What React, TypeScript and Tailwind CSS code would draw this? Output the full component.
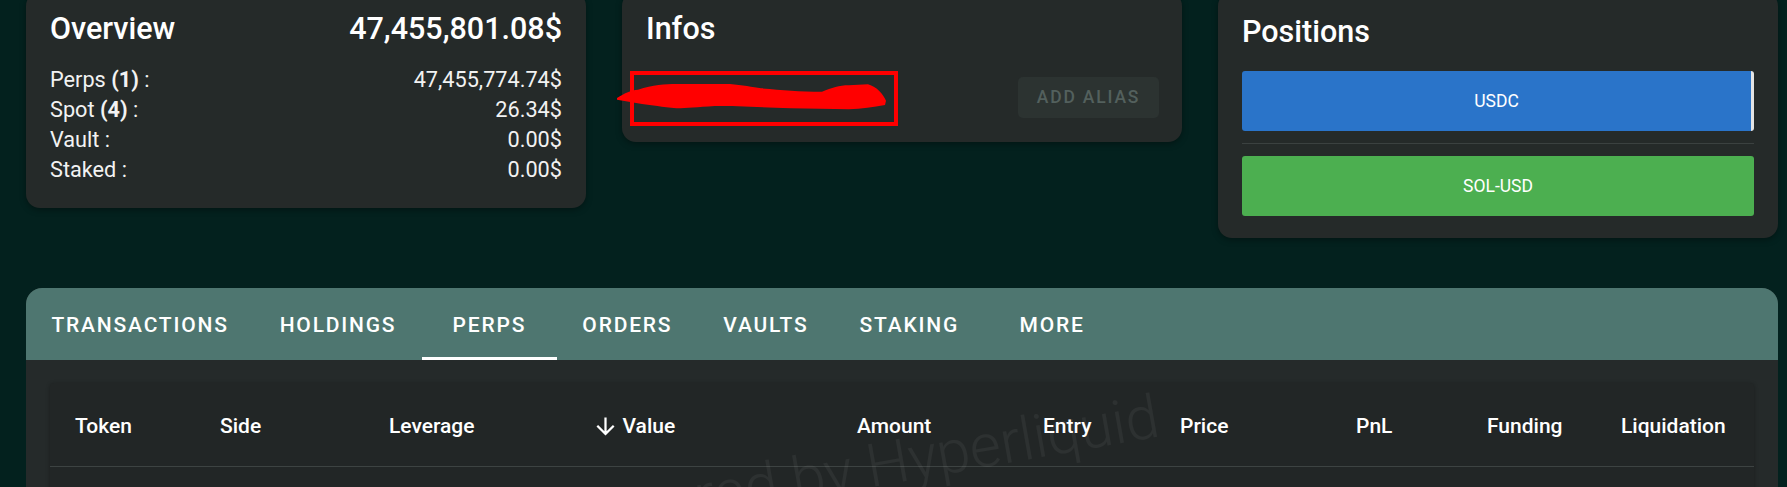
import React from 'react';

const overviewRows = [
  { label: 'Perps', count: 1, value: '47,455,774.74$' },
  { label: 'Spot', count: 4, value: '26.34$' },
  { label: 'Vault', value: '0.00$' },
  { label: 'Staked', value: '0.00$' },
];

const tabs = ['TRANSACTIONS', 'HOLDINGS', 'PERPS', 'ORDERS', 'VAULTS', 'STAKING', 'MORE'];

const columns = ['Token', 'Side', 'Leverage', 'Value', 'Amount', 'Entry', 'Price', 'PnL', 'Funding', 'Liquidation'];

function ArrowDown() {
  return (
    <svg viewBox="0 0 24 24" className="h-[27px] w-[27px] -ml-[4.5px] mr-[4px]" fill="currentColor">
      <path d="M20 12l-1.41-1.41L13 16.17V4h-2v12.17l-5.58-5.59L4 12l8 8 8-8z" />
    </svg>
  );
}

function Card({ children, className = '' }: { children: React.ReactNode; className?: string }) {
  return (
    <div className={`relative rounded-[14px] bg-[#252a29] shadow-[0_2px_6px_rgba(0,0,0,0.35)] px-6 ${className}`}>
      {children}
    </div>
  );
}

export default function App() {
  return (
    <div
      className="relative h-[487px] w-[1787px] overflow-hidden bg-[#03211e] text-white"
      style={{ fontFamily: 'Roboto, "Noto Sans", sans-serif' }}
    >
      <div className="pl-[26px] pr-[9px]">
        {/* Top cards */}
        <div className="-mt-[8px] grid grid-cols-3 items-start gap-[36px]">
          {/* Overview */}
          <Card className="pt-[19px] pb-[23px]">
            <div className="flex items-baseline justify-between">
              <h2 className="text-[30.5px] leading-[36px] font-medium">Overview</h2>
              <span className="text-[30.5px] leading-[36px] font-medium">47,455,801.08$</span>
            </div>
            <div className="mt-[18px]">
              {overviewRows.map((row) => (
                <div key={row.label} className="flex justify-between text-[21.7px] leading-[30px] text-[#f2f2f2]">
                  <span>
                    {row.label}
                    {row.count !== undefined && <b className="font-bold"> ({row.count})</b>} :
                  </span>
                  <span>{row.value}</span>
                </div>
              ))}
            </div>
          </Card>

          {/* Infos */}
          <Card className="pt-[19px] pb-[24px]">
            <h2 className="text-[30.5px] leading-[36px] font-medium">Infos</h2>
            <div className="mt-[30px] flex items-center justify-between">
              <span className="text-[21px] text-[#f2f2f2]">&nbsp;</span>
              <button className="h-[41px] w-[141px] -mr-[1px] rounded-[5px] bg-[#2c3331] text-[17.5px] font-medium tracking-[1.8px] text-[#53605d]">
                ADD ALIAS
              </button>
            </div>
            {/* redaction */}
            <div className="absolute left-[8px] top-[79px] h-[55px] w-[268px] border-[4px] border-[#ff0000]" />
            <svg className="absolute -left-[5px] top-[86px]" width="272" height="36" viewBox="0 0 272 36">
              <path
                d="M0 20 C8 15 14 12 21 11.7 C36 7 48 6 59.5 6 L113 6 C125 7 136 9 144 10.3 C165 12 182 13.7 205 13.7 C215 10 222 7.3 231.8 7.3 L251 6.3 C260 9 266 16 269 22.7 L268 27 C256 29 245 31 231.8 31.3 L174 30.3 C140 29 120 28 97.8 28 C80 29 70 30.3 59.5 30.3 C45 29 35 27 25 26 L0 21.7 Z"
                fill="#ff0000"
              />
            </svg>
          </Card>

          {/* Positions */}
          <Card className="pt-[22px] pb-[22px]">
            <h2 className="text-[30.5px] leading-[36px] font-medium">Positions</h2>
            <div className="mt-[21px] flex h-[60px] items-center justify-center rounded-[3px] border-r-[3px] border-[#e4e4e4] bg-[#2a74c9] text-[17.5px]">
              USDC
            </div>
            <div className="my-[12px] h-px bg-[#3b4140]" />
            <div className="flex h-[60px] items-center justify-center rounded-[3px] bg-[#4caf50] text-[17.5px]">
              SOL-USD
            </div>
          </Card>
        </div>

        {/* Tabs panel */}
        <div className="mt-[50px] overflow-hidden rounded-t-[16px] bg-[#252a2a]">
          <div className="flex h-[72px] items-stretch bg-[#4e7670]">
            {tabs.map((tab) => (
              <div
                key={tab}
                className="relative flex min-w-[135px] items-center justify-center px-[25.5px] pt-[3px] text-[21px] font-medium tracking-[1.8px]"
              >
                {tab}
                {tab === 'PERPS' && <div className="absolute bottom-0 left-0 right-0 h-[3px] bg-white" />}
              </div>
            ))}
          </div>
          <div className="px-6 pt-[23px] pb-6">
            <div className="h-[200px] rounded-t-[4px] bg-[#222626] shadow-[0_1px_4px_rgba(0,0,0,0.3)]">
              <div className="grid h-[84px] grid-cols-[145px_169px_207px_261px_186px_137px_176px_131px_134px_1fr] items-center border-b border-[#3d4342] pl-[25px] pt-[4px] text-[21px] font-medium">
                {columns.map((col) => (
                  <div key={col} className="flex items-center">
                    {col === 'Value' && <ArrowDown />}
                    {col}
                  </div>
                ))}
              </div>
            </div>
          </div>
        </div>
      </div>

      {/* watermark */}
      <div
        className="pointer-events-none absolute left-[554px] top-[493px] whitespace-nowrap text-[60px] leading-none font-light text-white/[0.05]"
        style={{ transform: 'rotate(-10deg)', transformOrigin: '0 50px' }}
      >
        Powered by Hyperliquid
      </div>
    </div>
  );
}
